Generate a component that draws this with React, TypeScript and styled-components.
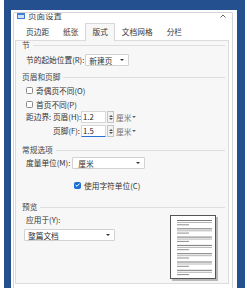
import React from "react";
import styled, { createGlobalStyle } from "styled-components";

const FONT = `"Noto Sans CJK SC", "Noto Sans", sans-serif`;

const Global = createGlobalStyle`
  html, body { margin: 0; padding: 0; background: #fff; }
  body { width: 250px; height: 288px; overflow: hidden; font-family: ${FONT}; color: #333; }
  * { box-sizing: border-box; }
`;

const Backdrop = styled.div`
  margin-left: 4px;
  width: 241px;
  height: 288px;
  background: #24508f;
  padding: 10px 8px 0 7px;
`;

const Dialog = styled.div`
  height: 278px;
  background: #fff;
  padding: 2px 4px 0 2px;
  display: flex;
`;

const Window = styled.div`
  flex: 1;
  display: flex;
  flex-direction: column;
  overflow: hidden;
  border: 1px solid #d4d4d4;
  border-bottom: none;
  border-radius: 2px 2px 0 0;
`;

const TitleBar = styled.div`
  height: 10px;
  display: flex;
  align-items: flex-start;
  padding: 0 6px 0 3px;
  overflow: hidden;
`;

const TitleText = styled.span`
  margin-top: -3px;
  margin-left: 3px;
  font-size: 8.5px;
  line-height: 11px;
  color: #444;
`;

const Chevron = styled.svg`
  margin-left: auto;
  margin-top: 1px;
`;

const Tabs = styled.div`
  height: 17px;
  display: flex;
  padding-left: 5px;
  position: relative;
  z-index: 1;
`;

const Tab = styled.div<{ $active?: boolean }>`
  padding: 0 ${(p) => (p.$active ? 6 : 7)}px;
  font-size: 7.7px;
  white-space: nowrap;
  color: #333;
  background: ${(p) => (p.$active ? "#f7f7f7" : "transparent")};
  border: ${(p) => (p.$active ? "1px solid #d8d8d8" : "none")};
  border-bottom: none;
  margin-bottom: ${(p) => (p.$active ? "-1px" : "0")};
  height: ${(p) => (p.$active ? "18px" : "17px")};
  line-height: ${(p) => (p.$active ? "16px" : "17px")};
`;

const Panel = styled.div`
  flex: 1;
  margin: 0 3px 4px 1px;
  background: #f7f7f7;
  border: 1px solid #dcdcdc;
  padding: 0 3px 0 6px;
  display: flex;
  flex-direction: column;
`;

const Heading = styled.div<{ $mt?: number }>`
  margin-top: ${(p) => p.$mt ?? 0}px;
  height: 8px;
  display: flex;
  align-items: center;
  font-size: 7.7px;
  line-height: 8px;
  color: #444;
  white-space: nowrap;
  &::after {
    content: "";
    flex: 1;
    height: 1px;
    background: #dedede;
    margin-left: 3px;
  }
`;

const Row = styled.div<{ $mt?: number; $indent?: number }>`
  margin-top: ${(p) => p.$mt ?? 0}px;
  height: 12px;
  display: flex;
  align-items: center;
  padding-left: ${(p) => p.$indent ?? 4}px;
`;

const Label = styled.span<{ $w?: number }>`
  font-size: 7.7px;
  line-height: 10px;
  white-space: nowrap;
  color: #333;
  width: ${(p) => (p.$w ? `${p.$w}px` : "auto")};
  text-align: ${(p) => (p.$w ? "right" : "left")};
  flex-shrink: 0;
`;

const Select = styled.div<{ $w: number; $ml?: number; $pl?: number; $mt?: number }>`
  width: ${(p) => p.$w}px;
  height: 12px;
  margin-left: ${(p) => p.$ml ?? 0}px;
  margin-top: ${(p) => p.$mt ?? 0}px;
  background: #fff;
  border: 1px solid #d2d2d2;
  border-radius: 1px;
  display: flex;
  align-items: center;
  justify-content: space-between;
  padding: 0 4px 0 ${(p) => p.$pl ?? 3}px;
  font-size: 7.7px;
  color: #333;
  white-space: nowrap;
`;

const Caret = styled.span<{ $color?: string }>`
  width: 0;
  height: 0;
  border-left: 2px solid transparent;
  border-right: 2px solid transparent;
  border-top: 2.5px solid ${(p) => p.$color ?? "#333"};
  display: inline-block;
`;

const Input = styled.div<{ $focused?: boolean }>`
  margin-left: 1px;
  width: 25px;
  height: 12px;
  background: #fff;
  border: 1px solid #d6d6d6;
  border-bottom: 1px solid ${(p) => (p.$focused ? "#2a6fd6" : "#d6d6d6")};
  font-size: 7.7px;
  line-height: 10px;
  padding-left: 1px;
  color: #222;
`;

const Spinner = styled.div`
  width: 7px;
  height: 12px;
  margin-left: 1px;
  border: 1px solid #c4c4c4;
  background: #f2f2f2;
  display: flex;
  flex-direction: column;
  align-items: center;
  justify-content: center;
  gap: 1px;
`;

const SpinArrow = styled.span<{ $up?: boolean }>`
  width: 0;
  height: 0;
  border-left: 2px solid transparent;
  border-right: 2px solid transparent;
  ${(p) => (p.$up ? "border-bottom: 2px solid #555;" : "border-top: 2px solid #555;")}
`;

const Unit = styled.span`
  margin-left: 2px;
  font-size: 7.7px;
  color: #777;
  display: flex;
  align-items: center;
  gap: 1px;
  white-space: nowrap;
`;

const CheckRow = styled.div<{ $mt?: number; $indent?: number }>`
  margin-top: ${(p) => p.$mt ?? 0}px;
  height: 10px;
  display: flex;
  align-items: center;
  gap: 3px;
  padding-left: ${(p) => p.$indent ?? 4}px;
  font-size: 7.7px;
  white-space: nowrap;
`;

const Box = styled.span<{ $checked?: boolean }>`
  width: 7px;
  height: 7px;
  border-radius: 1.5px;
  border: 1px solid ${(p) => (p.$checked ? "#1d6fd8" : "#8a8a8a")};
  background: ${(p) => (p.$checked ? "#1d6fd8" : "#fff")};
  display: flex;
  align-items: center;
  justify-content: center;
  flex-shrink: 0;
`;

const Preview = styled.div<{ $mt?: number }>`
  margin-top: ${(p) => p.$mt ?? 0}px;
  display: flex;
`;

const PreviewLeft = styled.div`
  width: 148px;
  display: flex;
  flex-direction: column;
  padding-top: 4px;
`;

const ApplyLabel = styled.div`
  padding-left: 4px;
  height: 10px;
  font-size: 7.7px;
  line-height: 10px;
  white-space: nowrap;
`;

const PageArt = styled.svg`
  margin-top: 4px;
  display: block;
`;

function Page() {
  const groups = [0, 1, 2, 3, 4, 5, 6];
  return (
    <PageArt width="48" height="66" viewBox="0 0 48 66">
      <rect x="2" y="2" width="46" height="64" fill="#b8b8b8" />
      <rect x="0.5" y="0.5" width="45" height="63" fill="#fff" stroke="#555" />
      {groups.map((g) => {
        const y = 5.5 + g * 8.3;
        return (
          <g key={g}>
            <line x1="7" x2="42" y1={y} y2={y} stroke="#7a7a7a" strokeWidth="1" />
            <line x1="7" x2="42" y1={y + 2} y2={y + 2} stroke="#b5b5b5" strokeWidth="1" />
            <line x1="7" x2="19" y1={y + 4.3} y2={y + 4.3} stroke="#8f8f8f" strokeWidth="1" />
          </g>
        );
      })}
    </PageArt>
  );
}

export default function App() {
  return (
    <>
      <Global />
      <Backdrop>
        <Dialog>
          <Window>
            <TitleBar>
              <svg width="8" height="6" viewBox="0 0 8 6">
                <rect x="0" y="0" width="8" height="6" fill="#3d7fd6" />
                <rect x="1" y="2" width="6" height="3" fill="#cfe0f7" />
              </svg>
              <TitleText>页面设置</TitleText>
              <Chevron width="6" height="4" viewBox="0 0 6 4">
                <polyline points="0.5,3.5 3,1 5.5,3.5" fill="none" stroke="#555" strokeWidth="0.9" />
              </Chevron>
            </TitleBar>
            <Tabs>
              <Tab>页边距</Tab>
              <Tab>纸张</Tab>
              <Tab $active>版式</Tab>
              <Tab>文档网格</Tab>
              <Tab>分栏</Tab>
            </Tabs>
            <Panel>
              <Heading $mt={0}>节</Heading>
              <Row $mt={5}>
                <Label>节的起始位置(R):</Label>
                <Select $w={44} $ml={1}>
                  新建页
                  <Caret />
                </Select>
              </Row>
              <Heading $mt={7}>页眉和页脚</Heading>
              <CheckRow $mt={4}>
                <Box />
                奇偶页不同(O)
              </CheckRow>
              <CheckRow $mt={4}>
                <Box />
                首页不同(P)
              </CheckRow>
              <Row $mt={2}>
                <Label $w={54}>距边界: 页眉(H):</Label>
                <Input>1.2</Input>
                <Spinner>
                  <SpinArrow $up />
                  <SpinArrow />
                </Spinner>
                <Unit>
                  厘米
                  <Caret $color="#666" />
                </Unit>
              </Row>
              <Row $mt={2}>
                <Label $w={54}>页脚(F):</Label>
                <Input $focused>1.5</Input>
                <Spinner>
                  <SpinArrow $up />
                  <SpinArrow />
                </Spinner>
                <Unit>
                  厘米
                  <Caret $color="#666" />
                </Unit>
              </Row>
              <Heading $mt={9}>常规选项</Heading>
              <Row $mt={3}>
                <Label>度量单位(M):</Label>
                <Select $w={73} $ml={2} $pl={5}>
                  厘米
                  <Caret />
                </Select>
              </Row>
              <CheckRow $mt={11} $indent={52}>
                <Box $checked>
                  <svg width="5" height="4" viewBox="0 0 5 4">
                    <polyline points="0.5,2 2,3.3 4.5,0.6" fill="none" stroke="#fff" strokeWidth="1" />
                  </svg>
                </Box>
                使用字符单位(C)
              </CheckRow>
              <Heading $mt={13}>预览</Heading>
              <Preview>
                <PreviewLeft>
                  <ApplyLabel>应用于(Y):</ApplyLabel>
                  <Select $w={91} $ml={2} $mt={4}>
                    整篇文档
                    <Caret />
                  </Select>
                </PreviewLeft>
                <Page />
              </Preview>
            </Panel>
          </Window>
        </Dialog>
      </Backdrop>
    </>
  );
}
